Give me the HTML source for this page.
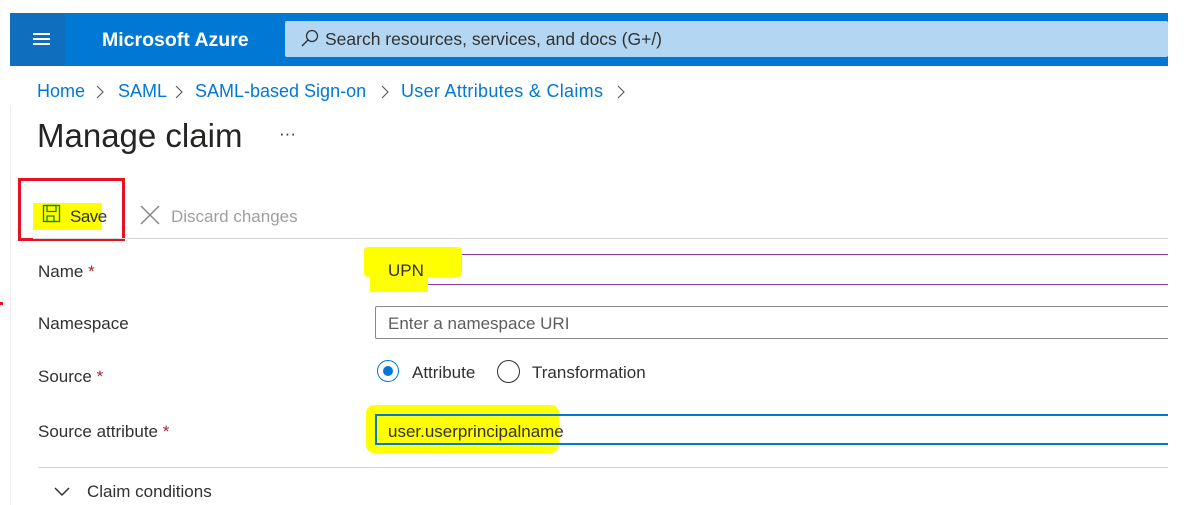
<!DOCTYPE html><html><head><style>
body{margin:0;width:1193px;height:505px;background:#fff;position:relative;overflow:hidden;font-family:"Liberation Sans",sans-serif}
.a{position:absolute}
.t{font-size:17px;color:#323130;white-space:nowrap}
.hl{background:#ffff00}
.b{position:absolute;top:81px;color:#0078d4;font-size:18px;white-space:nowrap}
</style></head><body>
<div class="a" style="left:10px;top:13px;width:1158px;height:53px;background:#0078d4"></div>
<div class="a" style="left:10px;top:13px;width:55px;height:53px;background:#106ebe"></div>
<div class="a" style="left:33px;top:33px;width:17px;height:2px;background:#fff;box-shadow:0 5px 0 #fff,0 10px 0 #fff"></div>
<div class="a" style="left:102px;top:29px;color:#fff;font-size:19.5px;font-weight:bold">Microsoft Azure</div>
<div class="a" style="left:285px;top:21px;width:883px;height:36px;background:#b3d7f3;border-radius:2px"></div>
<svg class="a" style="left:300px;top:28px" width="20" height="20"><circle cx="12" cy="8" r="5.5" fill="none" stroke="#323130" stroke-width="1.3"/><line x1="8" y1="12" x2="2" y2="18" stroke="#323130" stroke-width="1.4"/></svg>
<div class="a t" style="left:325px;top:29px;color:#323130;font-size:17.5px">Search resources, services, and docs (G+/)</div>
<div class="b" style="left:37px">Home</div>
<div class="b" style="left:118px">SAML</div>
<div class="b" style="left:195px">SAML-based Sign-on</div>
<div class="b" style="left:401px;letter-spacing:0.3px">User Attributes &amp; Claims</div>
<svg class="a" style="left:95px;top:84px" width="540" height="16"><g fill="none" stroke="#605e5c" stroke-width="1.2"><path d="M2 2L8 8L2 14"/><path d="M81 2L87 8L81 14"/><path d="M287 2L293 8L287 14"/><path d="M523 2L529 8L523 14"/></g></svg>
<div class="a" style="left:10px;top:105px;width:1px;height:400px;background:#eee"></div>
<div class="a t" style="left:37px;top:117px;font-size:33px;color:#252423">Manage claim</div>
<div class="a t" style="left:279px;top:124px;font-size:17px">···</div>
<div class="a" style="left:18px;top:178px;width:107px;height:63px;border:3px solid #e81123;box-sizing:border-box"></div>
<div class="a hl" style="left:33px;top:203px;width:69px;height:27px"></div>
<svg class="a" style="left:42px;top:204px" width="20" height="20"><rect x="1.5" y="1.5" width="16" height="16" fill="none" stroke="#107c10" stroke-width="1.3"/><rect x="5" y="1.5" width="9" height="6" fill="none" stroke="#107c10" stroke-width="1.2"/><rect x="5" y="12" width="7" height="5.5" fill="none" stroke="#107c10" stroke-width="1.2"/></svg>
<div class="a t" style="left:70px;top:207px;font-size:17px;letter-spacing:-0.5px">Save</div>
<svg class="a" style="left:139px;top:204px" width="22" height="22"><path d="M2 2L20 20M20 2L2 20" stroke="#8a8886" stroke-width="1.5"/></svg>
<div class="a t" style="left:171px;top:207px;color:#a19f9d">Discard changes</div>
<div class="a" style="left:33px;top:238px;width:1135px;height:1px;background:#d6d6d6"></div>
<div class="a t" style="left:38px;top:262px">Name <span style="color:#a4262c">*</span></div>
<div class="a" style="left:375px;top:254px;width:793px;height:31px;border:1px solid #8a3aa0;border-right:none;box-sizing:border-box"></div>
<div class="a hl" style="left:364px;top:247px;width:98px;height:30px;border-radius:4px"></div>
<div class="a hl" style="left:370px;top:272px;width:58px;height:20px"></div>
<div class="a t" style="left:388px;top:261px">UPN</div>
<div class="a t" style="left:38px;top:314px">Namespace</div>
<div class="a" style="left:375px;top:306px;width:793px;height:33px;border:1px solid #8a8886;border-right:none;border-radius:2px 0 0 2px;box-sizing:border-box"></div>
<div class="a t" style="left:388px;top:314px;color:#605e5c">Enter a namespace URI</div>
<div class="a t" style="left:38px;top:367px">Source <span style="color:#a4262c">*</span></div>
<div class="a" style="left:377px;top:360px;width:22px;height:22px;border:1px solid #0078d4;border-radius:50%;box-sizing:border-box"></div>
<div class="a" style="left:383px;top:366px;width:10px;height:10px;background:#0078d4;border-radius:50%"></div>
<div class="a t" style="left:412px;top:363px">Attribute</div>
<div class="a" style="left:497px;top:360px;width:23px;height:23px;border:1px solid #323130;border-radius:50%;box-sizing:border-box"></div>
<div class="a t" style="left:532px;top:363px">Transformation</div>
<div class="a t" style="left:38px;top:422px">Source attribute <span style="color:#a4262c">*</span></div>
<div class="a hl" style="left:366px;top:405px;width:193px;height:48px;border-radius:8px"></div>
<div class="a" style="left:375px;top:414px;width:793px;height:31px;border:2px solid #0078d4;border-right:none;box-sizing:border-box"></div>
<div class="a hl" style="left:377px;top:416px;width:150px;height:27px"></div>
<div class="a t" style="left:388px;top:422px">user.userprincipalname</div>
<div class="a" style="left:38px;top:467px;width:1130px;height:1px;background:#d6d6d6"></div>
<svg class="a" style="left:53px;top:485px" width="18" height="14"><path d="M2 3L9 10L16 3" fill="none" stroke="#323130" stroke-width="1.5"/></svg>
<div class="a t" style="left:87px;top:482px">Claim conditions</div>
<div class="a" style="left:0;top:302px;width:3px;height:3px;background:#e81123"></div>
</body></html>
